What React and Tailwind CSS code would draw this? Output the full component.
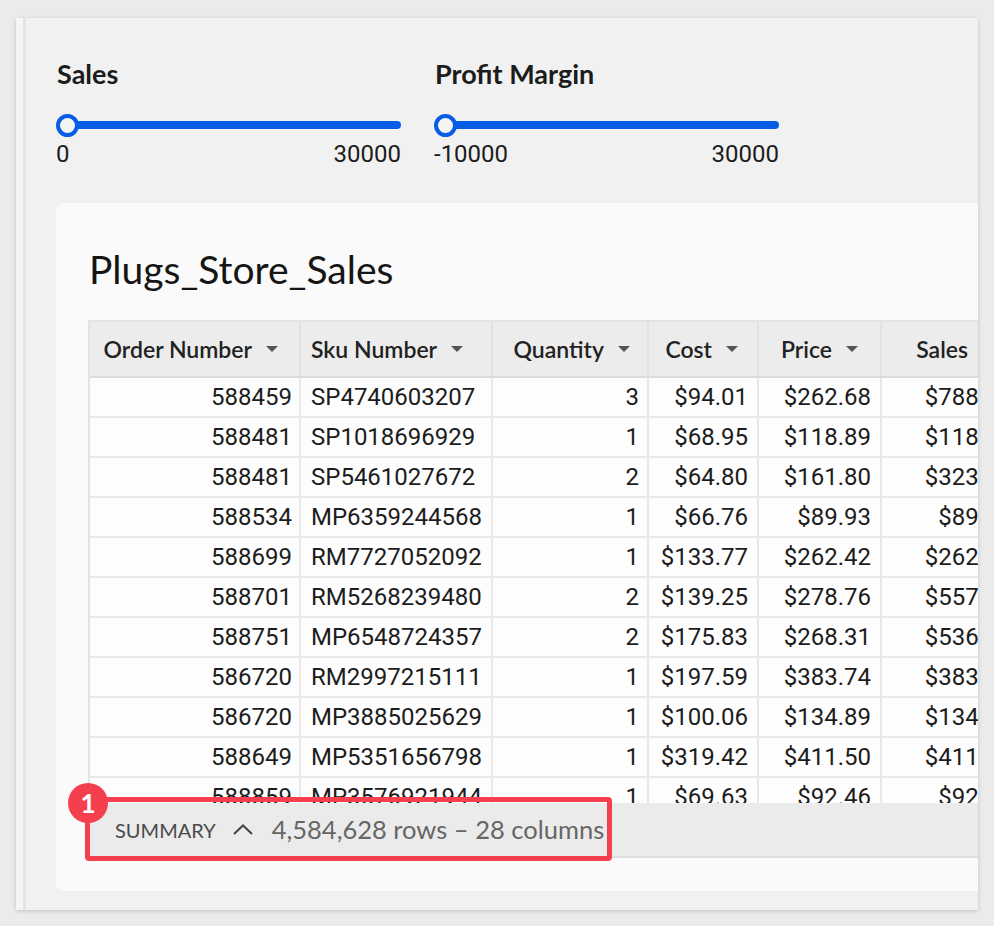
import React from "react";

const cols = [
  { label: "Order Number", w: "w-[211px]", head: "justify-end pr-[21px]", cell: "justify-end pr-[7px]" },
  { label: "Sku Number", w: "w-[192px]", head: "justify-start pl-[10px]", cell: "justify-start pl-[10px]" },
  { label: "Quantity", w: "w-[156px]", head: "justify-end pr-[17px]", cell: "justify-end pr-[8px]" },
  { label: "Cost", w: "w-[110px]", head: "justify-end pr-[19px]", cell: "justify-end pr-[9px]" },
  { label: "Price", w: "w-[123px]", head: "justify-end pr-[22px]", cell: "justify-end pr-[9px]" },
  { label: "Sales", w: "w-[140px]", head: "justify-end pr-[26px]", cell: "justify-end pr-[8px]" },
  { label: "Profit", w: "w-[134px]", head: "justify-end pr-[20px]", cell: "justify-end pr-[8px]" },
];

const rows = [
  ["588459", "SP4740603207", "3", "$94.01", "$262.68", "$788.04", "$505.99"],
  ["588481", "SP1018696929", "1", "$68.95", "$118.89", "$118.89", "$49.94"],
  ["588481", "SP5461027672", "2", "$64.80", "$161.80", "$323.60", "$194.00"],
  ["588534", "MP6359244568", "1", "$66.76", "$89.93", "$89.93", "$23.17"],
  ["588699", "RM7727052092", "1", "$133.77", "$262.42", "$262.42", "$128.65"],
  ["588701", "RM5268239480", "2", "$139.25", "$278.76", "$557.52", "$279.02"],
  ["588751", "MP6548724357", "2", "$175.83", "$268.31", "$536.62", "$184.96"],
  ["586720", "RM2997215111", "1", "$197.59", "$383.74", "$383.74", "$186.15"],
  ["586720", "MP3885025629", "1", "$100.06", "$134.89", "$134.89", "$34.83"],
  ["588649", "MP5351656798", "1", "$319.42", "$411.50", "$411.50", "$92.08"],
  ["588859", "MP3576921944", "1", "$69.63", "$92.46", "$92.46", "$22.83"],
];

function Caret() {
  return (
    <svg width="12" height="6" viewBox="0 0 12 6" className="shrink-0">
      <path d="M0 0 L12 0 L6 6 Z" fill="#555" />
    </svg>
  );
}

function RangeSlider({ label, min, max }) {
  return (
    <div className="w-[345px] flex flex-col">
      <div className="h-[32px] leading-[32px] pl-[1px] text-[27px] font-bold text-[#1c1c1c] font-['Lato',sans-serif]">
        {label}
      </div>
      <div className="relative mt-[23px] h-[24px] flex items-center">
        <div className="ml-[11px] h-[8px] flex-1 rounded-full bg-[#075ee6]" />
        <div className="absolute left-0 top-[0.5px] w-[23px] h-[23px] rounded-full border-[4px] border-[#075ee6] bg-[#f4f4f4]" />
      </div>
      <div className="mt-[3px] h-[28px] flex justify-between text-[24px] leading-[28px] text-[#1c1c1c] font-['Roboto',sans-serif]">
        <span>{min}</span>
        <span>{max}</span>
      </div>
    </div>
  );
}

export default function App() {
  return (
    <div className="min-h-[926px] bg-[#ebebeb] pt-[18px] pl-[16px] pr-[16px]">
      <div className="w-[962px] h-[892px] flex overflow-hidden bg-[#f1f1f1] shadow-[0_1px_4px_rgba(0,0,0,0.18)]">
        <div className="w-[10px] shrink-0 bg-[#f5f5f5] border-r-[3px] border-[#e4e4e4]" />
        <div className="flex-1 min-w-0 pl-[30px] pt-[40px]">
          <div className="flex gap-[33px]">
            <RangeSlider label="Sales" min="0" max="30000" />
            <RangeSlider label="Profit Margin" min="-10000" max="30000" />
          </div>

          <div className="mt-[35px] w-[1200px] rounded-[8px] bg-[#fafafa] pl-[32px] pt-[44px] pb-[33px]">
            <div className="h-[44px] leading-[44px] pl-[1px] text-[39px] text-[#151515] font-['Lato',sans-serif]">
              Plugs_Store_Sales
            </div>

            <div className="mt-[29px] border-l-2 border-t-2 border-[#e3e3e3]">
              <div className="flex h-[56px] bg-[#ececec] border-b-2 border-[#dcdcdc] font-['Lato',sans-serif] text-[23px] font-semibold text-[#222]">
                {cols.map((c) => (
                  <div
                    key={c.label}
                    className={`${c.w} ${c.head} shrink-0 flex items-center gap-[14px] border-r-2 border-[#e2e2e2]`}
                  >
                    <span>{c.label}</span>
                    <Caret />
                  </div>
                ))}
              </div>

              <div className="h-[425px] overflow-hidden bg-[#fdfdfd] font-['Roboto',sans-serif] text-[24px] text-[#1c1c1c]">
                {rows.map((r, i) => (
                  <div key={i} className="flex h-[40px] border-b-2 border-[#e8e8e8]">
                    {r.map((v, j) => (
                      <div
                        key={j}
                        className={`${cols[j].w} ${cols[j].cell} shrink-0 flex items-center border-r-2 border-[#e8e8e8]`}
                      >
                        {v}
                      </div>
                    ))}
                  </div>
                ))}
              </div>

              <div className="relative flex items-center h-[55px] bg-[#ebebeb] border-b-2 border-[#dedede] pl-[25px] font-['Lato',sans-serif]">
                <span className="text-[20px] text-[#4a4a4a]">SUMMARY</span>
                <svg width="20" height="11" viewBox="0 0 20 11" className="ml-[17px]">
                  <path d="M1 10 L10 1.5 L19 10" fill="none" stroke="#444" strokeWidth="2" />
                </svg>
                <span className="ml-[19px] text-[25.5px] text-[#666]">4,584,628 rows – 28 columns</span>

                <div className="absolute left-[-5px] top-[-6px] w-[527px] h-[64px] rounded-[4px] border-[5px] border-[#f43f4e]" />
                <div className="absolute left-[-22px] top-[-20px] w-[40px] h-[40px] rounded-full bg-[#f43f4e] flex items-center justify-center text-white text-[26px] font-bold font-['Lato',sans-serif]">
                  1
                </div>
              </div>
            </div>
          </div>
        </div>
      </div>
    </div>
  );
}
